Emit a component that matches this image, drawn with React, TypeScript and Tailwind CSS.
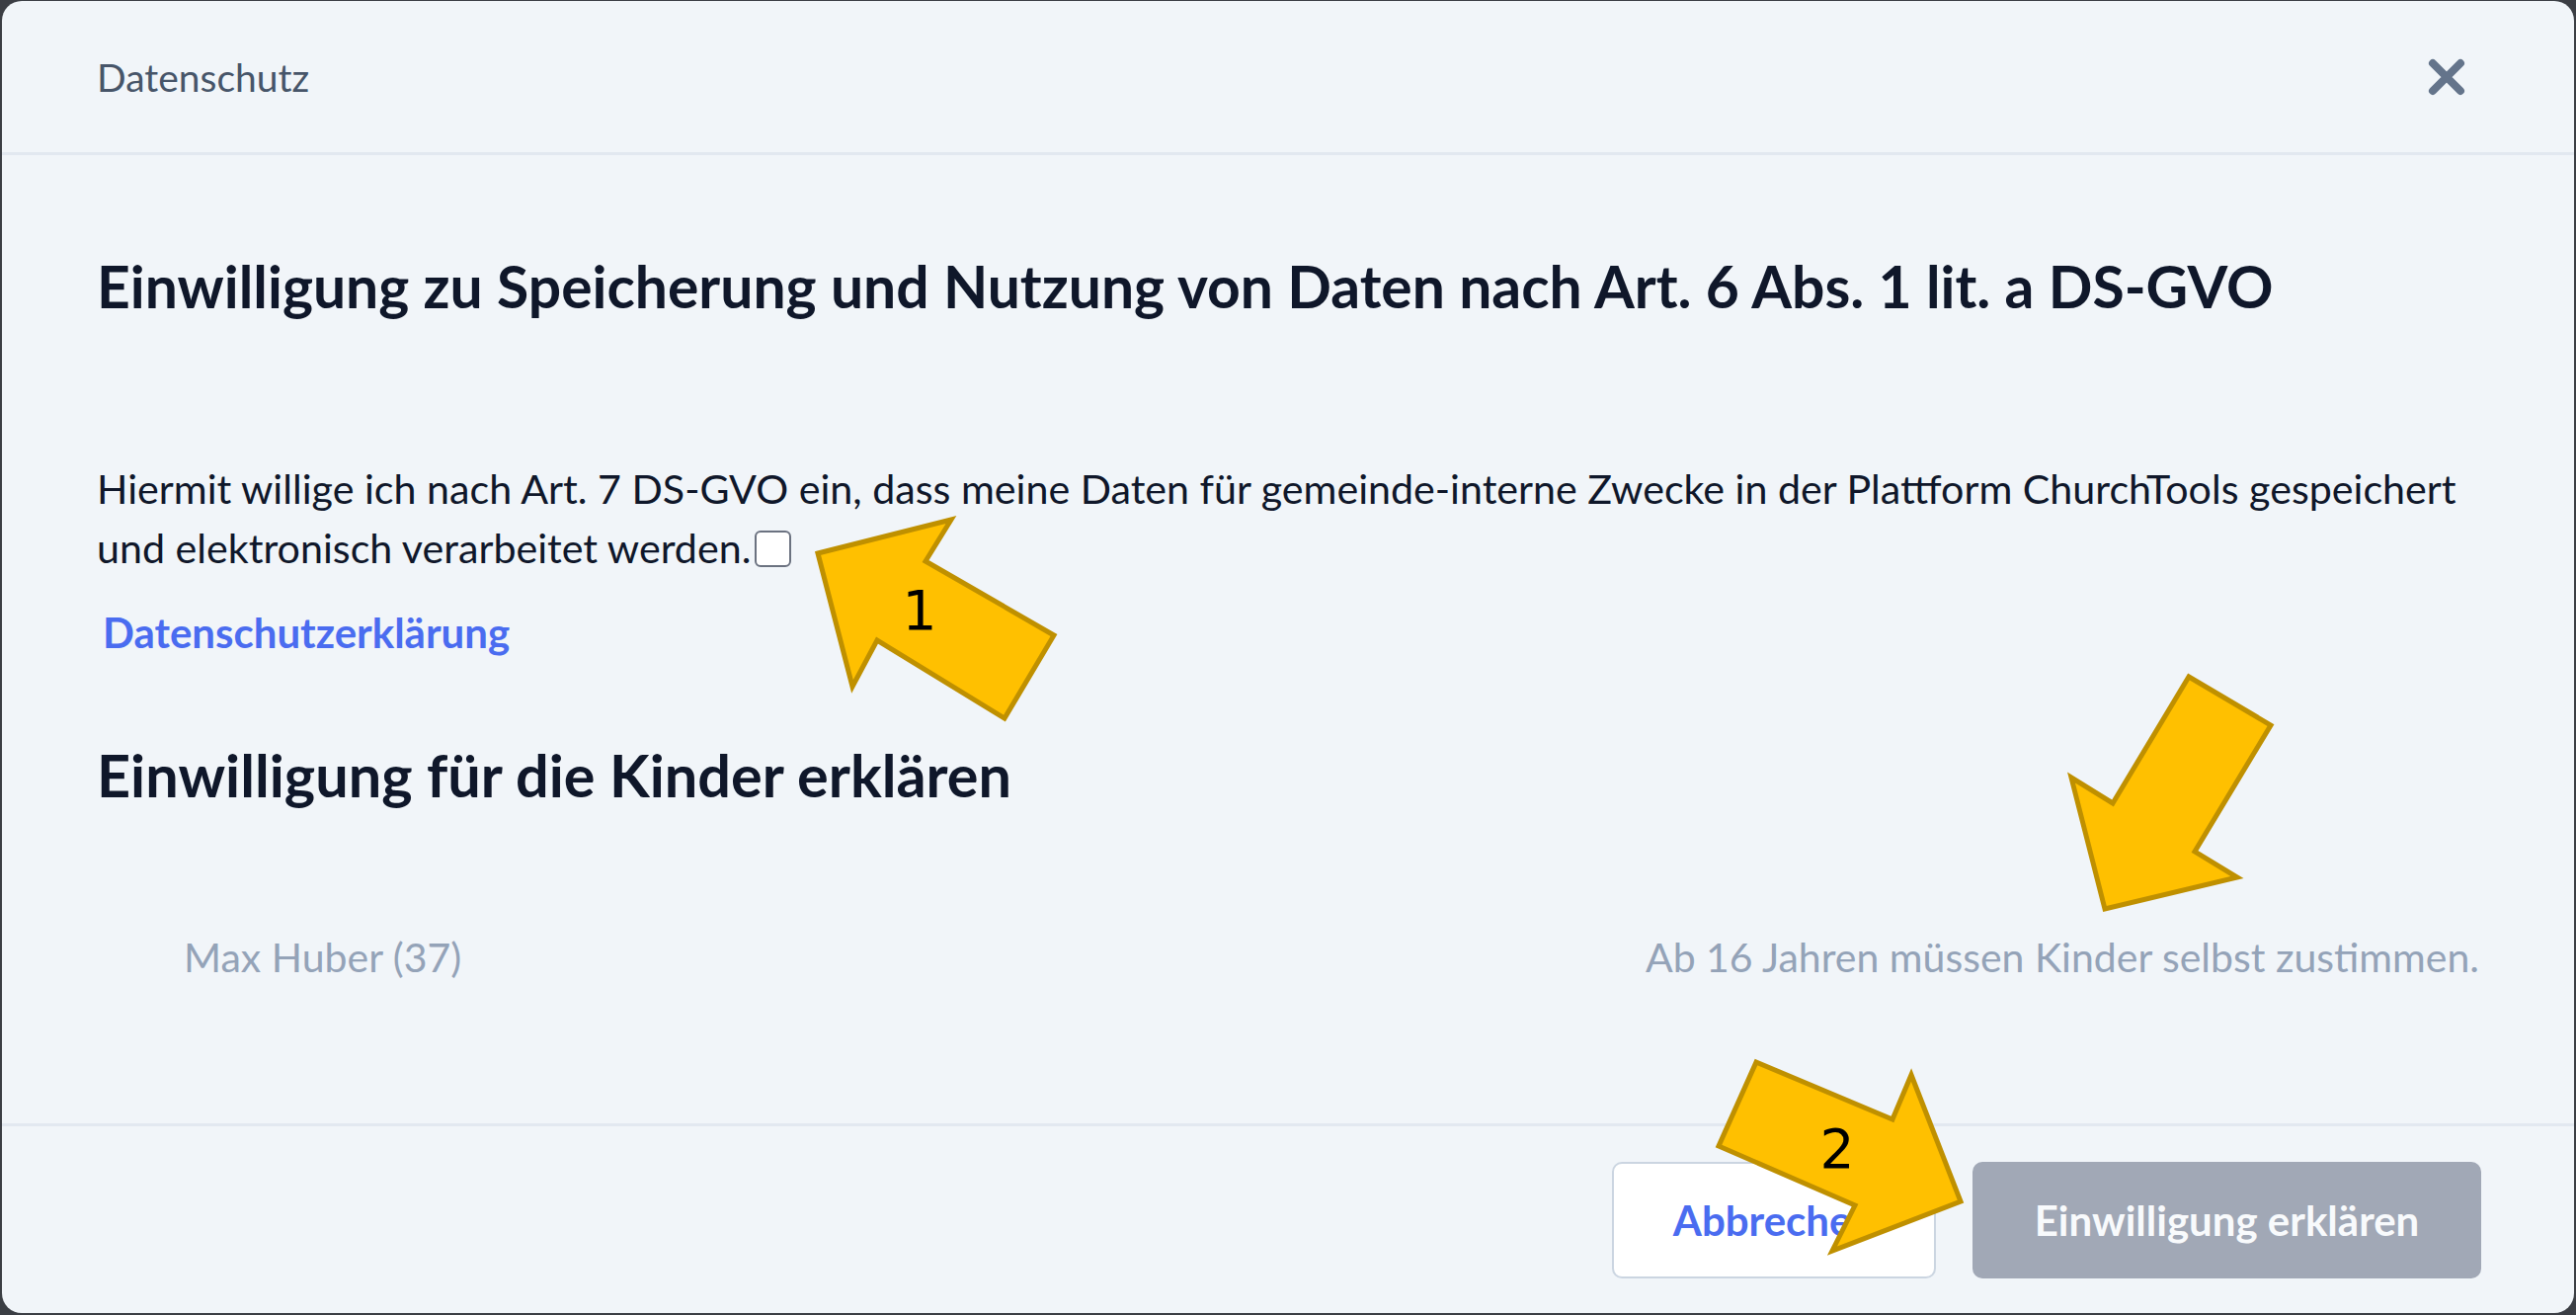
import React from "react";

function Arrows() {
  return (
    <svg
      className="pointer-events-none absolute left-0 top-0"
      width={2608}
      height={1331}
      viewBox="0 0 2608 1331"
    >
      <g fill="#FFC000" stroke="#BF9000" strokeWidth={5} strokeLinejoin="miter">
        <polygon points="828,560 963,526 937,568 1067,643 1017,727 888,648 863,695" />
        <polygon points="2216,685 2299,734 2222,862 2265,888 2131,920 2097,787 2139,813" />
        <polygon points="1778,1075 1916,1133 1935,1088 1985,1216 1855,1266 1878,1220 1740,1160" />
      </g>
      <text
        x={931}
        y={637}
        textAnchor="middle"
        fontFamily="'DejaVu Sans', sans-serif"
        fontSize={55}
        fill="#000"
      >
        1
      </text>
      <text
        x={1860}
        y={1182}
        textAnchor="middle"
        fontFamily="'DejaVu Sans', sans-serif"
        fontSize={55}
        fill="#000"
      >
        2
      </text>
    </svg>
  );
}

export default function App() {
  return (
    <div
      className="relative h-[1331px] w-[2608px] overflow-hidden bg-[#3b3e44] pb-[2px] pl-[2px] pr-[2px] pt-[1px]"
      style={{ fontFamily: "Lato, 'Noto Sans', sans-serif" }}
    >
      <div className="flex h-full flex-col rounded-[20px] bg-[#f1f5f9]">
        {/* Header */}
        <div className="flex h-[156px] shrink-0 items-center justify-between border-b-[3px] border-[#e2e8f0] pl-[96px] pr-[109px]">
          <span className="text-[39px] leading-[48px] text-[#475569]">Datenschutz</span>
          <svg width={40} height={40} viewBox="0 0 40 40">
            <path
              d="M6 6 L34 34 M34 6 L6 34"
              stroke="#64748b"
              strokeWidth={8}
              strokeLinecap="round"
            />
          </svg>
        </div>

        {/* Body */}
        <div className="flex flex-1 flex-col px-[96px] pt-[97px]">
          <h1 className="text-[58.8px] font-bold leading-[72px] text-[#0f172a]">
            Einwilligung zu Speicherung und Nutzung von Daten nach Art. 6 Abs. 1 lit. a DS-GVO
          </h1>
          <p className="mt-[138px] text-[41.2px] leading-[60px] text-[#0f172a]">
            Hiermit willige ich nach Art. 7 DS-GVO ein, dass meine Daten für gemeinde-interne Zwecke in der Plattform ChurchTools gespeichert
            und elektronisch verarbeitet werden.
            <span className="ml-[4px] inline-block h-[37px] w-[37px] rounded-[6px] border-2 border-[#6b7280] bg-white align-[-4px]" />
          </p>
          <a className="ml-[6px] mt-[32px] text-[42px] font-bold leading-[48px] text-[#4a6cf0]">
            Datenschutzerklärung
          </a>
          <h2 className="mt-[84px] text-[59.4px] font-bold leading-[72px] text-[#0f172a]">
            Einwilligung für die Kinder erklären
          </h2>
          <div className="mt-[125px] flex items-center justify-between pl-[88px] text-[41px] leading-[48px] text-[#94a3b8]">
            <span>Max Huber (37)</span>
            <span>Ab 16 Jahren müssen Kinder selbst zustimmen.</span>
          </div>
        </div>

        {/* Footer */}
        <div className="flex shrink-0 items-center justify-end gap-[37px] border-t-[3px] border-[#e2e8f0] pb-[35px] pl-[96px] pr-[94px] pt-[36px]">
          <button className="flex h-[118px] w-[328px] items-center justify-center rounded-[10px] border-2 border-[#cbd5e1] bg-white text-[42px] font-bold text-[#4a6cf0]">
            Abbrechen
          </button>
          <button className="flex h-[118px] w-[515px] items-center justify-center rounded-[10px] bg-[#a1a8b6] text-[42px] font-bold text-[#f8fafc]">
            Einwilligung erklären
          </button>
        </div>
      </div>
      <Arrows />
    </div>
  );
}
